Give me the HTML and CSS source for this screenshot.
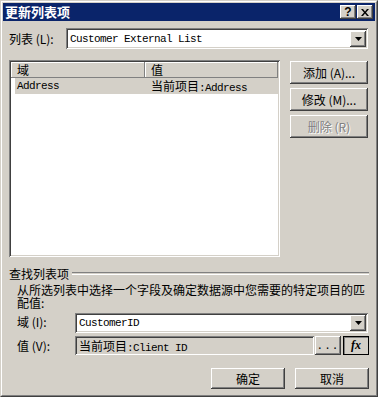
FILE: index.html
```html
<!DOCTYPE html>
<html lang="zh-CN">
<head>
  <meta charset="UTF-8">
  <title>更新列表项</title>
  <link rel="stylesheet" href="styles.css">
</head>
<body>
  <div class="window">
    <div class="frame">
      <div class="titlebar">
        <span class="title">更新列表项</span>
        <div class="caption-buttons">
          <span class="cap-btn help">?</span>
          <span class="cap-btn close">
            <svg width="8" height="7" viewBox="0 0 8 7"><path d="M0 0h2l2 2.5L6 0h2L5 3.5 8 7H6L4 4.5 2 7H0l3-3.5z" fill="#000"/></svg>
          </span>
        </div>
      </div>

      <div class="content">
        <div class="row list-row">
          <label class="lbl">列表 (L):</label>
          <div class="combo wide">
            <span class="combo-text mono">Customer External List</span>
            <span class="drop-btn"><svg width="7" height="4" viewBox="0 0 7 4"><path d="M0 0h7L3.5 4z" fill="#000"/></svg></span>
          </div>
        </div>

        <div class="main">
          <div class="listview">
            <div class="lv-header">
              <span class="lv-col c1">域</span>
              <span class="lv-col c2">值</span>
            </div>
            <div class="lv-item">
              <span class="c1 mono">Address</span>
              <span class="c2"><span>当前项目</span><span class="mono">:Address</span></span>
            </div>
          </div>
          <div class="side-buttons">
            <button class="btn">添加 (A)...</button>
            <button class="btn">修改 (M)...</button>
            <button class="btn disabled">删除 (R)</button>
          </div>
        </div>

        <div class="group">
          <div class="group-title"><span>查找列表项</span><span class="etch"></span></div>
          <p class="desc">从所选列表中选择一个字段及确定数据源中您需要的特定项目的匹配值:</p>
          <div class="row field-row">
            <label class="lbl short">域 (I):</label>
            <div class="combo field">
              <span class="combo-text mono">CustomerID</span>
              <span class="drop-btn"><svg width="7" height="4" viewBox="0 0 7 4"><path d="M0 0h7L3.5 4z" fill="#000"/></svg></span>
            </div>
          </div>
          <div class="row field-row">
            <label class="lbl short">值 (V):</label>
            <div class="value-box"><span>当前项目</span><span class="mono">:Client ID</span></div>
            <button class="btn small dots">...</button>
            <button class="btn small fx pressed"><i>fx</i></button>
          </div>
        </div>

        <div class="footer">
          <button class="btn wide-btn">确定</button>
          <button class="btn wide-btn">取消</button>
        </div>
      </div>
    </div>
  </div>
</body>
</html>
```

FILE: styles.css
```css
body {
  margin: 0;
  background: #d4d0c8;
  font-family: "Noto Sans CJK SC", "DejaVu Sans", sans-serif;
  font-size: 12px;
  color: #000;
}
.mono {
  font-family: "Liberation Mono", "DejaVu Sans Mono", monospace;
  font-size: 11px;
  letter-spacing: -0.6px;
}
.window {
  width: 378px;
  height: 397px;
  box-sizing: border-box;
  border: 1px solid;
  border-color: #d4d0c8 #404040 #404040 #d4d0c8;
}
.frame {
  height: 100%;
  box-sizing: border-box;
  border: 1px solid;
  border-color: #fff #808080 #808080 #fff;
  padding: 1px;
}
.titlebar {
  height: 18px;
  background: #0a246a;
  display: flex;
  align-items: center;
  justify-content: space-between;
  padding: 0 2px 0 2px;
}
.title {
  color: #fff;
  font-weight: bold;
  font-size: 13px;
  line-height: 18px;
}
.caption-buttons {
  display: flex;
  gap: 1px;
}
.cap-btn {
  width: 16px;
  height: 14px;
  box-sizing: border-box;
  background: #d4d0c8;
  box-shadow: inset -1px -1px #404040, inset 1px 1px #fff, inset -2px -2px #808080;
  display: flex;
  align-items: center;
  justify-content: center;
}
.help {
  font-family: "Liberation Sans", sans-serif;
  font-weight: bold;
  font-size: 12px;
  line-height: 14px;
}
.content {
  padding: 7px 6px 0 6px;
}
.row {
  display: flex;
  align-items: center;
}
.lbl {
  width: 57px;
  white-space: nowrap;
}
.combo {
  display: flex;
  align-items: center;
  justify-content: space-between;
  box-sizing: border-box;
  background: #fff;
  box-shadow: inset 1px 1px #808080, inset -1px -1px #fff, inset 2px 2px #404040, inset -2px -2px #d4d0c8;
  padding: 2px 2px 2px 4px;
}
.combo.wide {
  width: 302px;
  height: 21px;
}
.drop-btn {
  width: 16px;
  height: 16px;
  box-sizing: border-box;
  background: #d4d0c8;
  box-shadow: inset -1px -1px #404040, inset 1px 1px #fff, inset -2px -2px #808080;
  display: flex;
  align-items: center;
  justify-content: center;
}
.main {
  display: flex;
  gap: 10px;
  margin-top: 11px;
}
.listview {
  width: 271px;
  height: 197px;
  box-sizing: border-box;
  background: #fff;
  box-shadow: inset 1px 1px #808080, inset -1px -1px #fff, inset 2px 2px #404040, inset -2px -2px #d4d0c8;
  padding: 2px;
}
.lv-header {
  display: flex;
  height: 16px;
}
.lv-col {
  box-sizing: border-box;
  background: #d4d0c8;
  box-shadow: inset -1px -1px #808080, inset 1px 1px #fff;
  line-height: 16px;
  padding-left: 6px;
}
.lv-col.c1 {
  width: 134px;
}
.lv-col.c2 {
  flex: 1;
}
.lv-item {
  display: flex;
  margin-left: 4px;
  height: 16px;
  line-height: 16px;
  background: #d4d0c8;
}
.lv-item .c1 {
  width: 130px;
  padding-left: 2px;
}
.lv-item .c2 {
  padding-left: 4px;
}
.side-buttons {
  display: flex;
  flex-direction: column;
  gap: 4px;
  margin-top: 1px;
}
.btn {
  width: 78px;
  height: 23px;
  box-sizing: border-box;
  border: none;
  background: #d4d0c8;
  box-shadow: inset -1px -1px #404040, inset 1px 1px #fff, inset -2px -2px #808080;
  font-family: inherit;
  font-size: 12px;
  color: #000;
  padding: 0;
}
.btn.disabled {
  color: #808080;
  text-shadow: 1px 1px #fff;
}
.group {
  margin-top: 9px;
}
.group-title {
  display: flex;
  align-items: center;
  gap: 3px;
  height: 14px;
}
.etch {
  flex: 1;
  height: 1px;
  border-top: 1px solid #808080;
  border-bottom: 1px solid #fff;
}
.desc {
  margin: 3px 0 0 8px;
  line-height: 13px;
  width: 352px;
}
.field-row {
  margin-left: 8px;
}
.field-row .lbl {
  width: 58px;
}
.combo.field {
  width: 293px;
  height: 20px;
  margin-top: 4px;
}
.field-row + .field-row {
  margin-top: 3px;
}
.value-box {
  width: 239px;
  height: 19px;
  box-sizing: border-box;
  background: #d4d0c8;
  box-shadow: inset 1px 1px #808080, inset -1px -1px #fff, inset 2px 2px #404040, inset -2px -2px #d4d0c8;
  padding: 0 4px;
  line-height: 19px;
}
.btn.small {
  width: 26px;
  height: 19px;
  margin-left: 1px;
}
.btn.dots {
  font-family: "Liberation Mono", monospace;
  font-size: 11px;
  letter-spacing: 1px;
}
.btn.fx {
  margin-left: 2px;
  box-shadow: inset 1px 1px #000, inset -1px -1px #000, inset 2px 2px #808080;
  font-family: "Liberation Serif", serif;
  font-size: 12px;
  font-weight: bold;
}
.footer {
  display: flex;
  justify-content: flex-end;
  gap: 10px;
  margin-top: 13px;
}
.btn.wide-btn {
  width: 74px;
  height: 21px;
}
```
